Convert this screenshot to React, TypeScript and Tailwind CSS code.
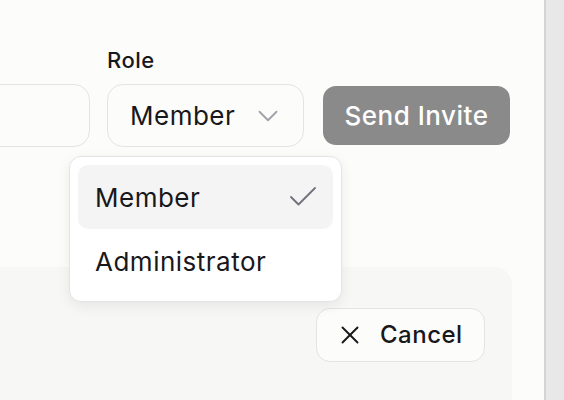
import React from "react";
import { Check, ChevronDown, X } from "lucide-react";

export default function App() {
  return (
    <div
      className="flex h-[400px] w-[564px] overflow-hidden"
      style={{ fontFamily: "Inter, 'Noto Sans', sans-serif" }}
    >
      <div className="relative flex h-full w-[544px] flex-col bg-[#fcfcfa] text-[#18181b] tracking-[0.5px]">
        <div className="pl-[107px] pt-[48px] text-[22px] font-medium leading-[24px]">Role</div>
        <div className="ml-[-110px] mt-[12px] flex items-center">
          <div className="h-[63px] w-[200px] shrink-0 rounded-[16px] border-[1.5px] border-[#e4e4e7] bg-[#fcfcfa]" />
          <div className="ml-[17px] flex h-[63px] w-[197px] shrink-0 items-center justify-between rounded-[16px] border-[1.5px] border-[#e4e4e7] bg-[#fcfcfa] pl-[22px] pr-[18px]">
            <span className="text-[26px] leading-none">Member</span>
            <ChevronDown size={34} className="text-[#a1a1aa]" strokeWidth={1.3} />
          </div>
          <div className="ml-[19px] flex h-[59px] w-[187px] shrink-0 items-center justify-center rounded-[13px] bg-[#8a8a8a] text-[26px] font-medium text-white">
            Send Invite
          </div>
        </div>
        <div className="mt-[120px] flex w-[512px] flex-1 items-start justify-end rounded-tr-[18px] bg-[#f7f7f5] pr-[27px] pt-[41px]">
          <div className="flex h-[54px] w-[169px] items-center gap-[15px] rounded-[14px] border-[1.5px] border-[#e4e4e7] bg-[#fcfcfb] pl-[18px] text-[24px] font-medium">
            <X size={30} strokeWidth={1.5} />
            <span>Cancel</span>
          </div>
        </div>
        <div className="absolute left-[69px] top-[156px] flex w-[273px] flex-col rounded-[12px] border-[1.5px] border-[#e4e4e7] bg-white p-[8px] shadow-[0_4px_14px_rgba(0,0,0,0.07)]">
          <div className="flex h-[64px] items-center justify-between rounded-[10px] bg-[#f4f4f5] pl-[17px] pr-[12px]">
            <span className="text-[26px]">Member</span>
            <Check size={36} className="text-[#71717a]" strokeWidth={1.2} />
          </div>
          <div className="flex h-[64px] items-center pl-[17px]">
            <span className="text-[26px]">Administrator</span>
          </div>
        </div>
      </div>
      <div className="h-full flex-1 border-l-2 border-[#d4d4d4] bg-[#e8e8e8]" />
    </div>
  );
}
